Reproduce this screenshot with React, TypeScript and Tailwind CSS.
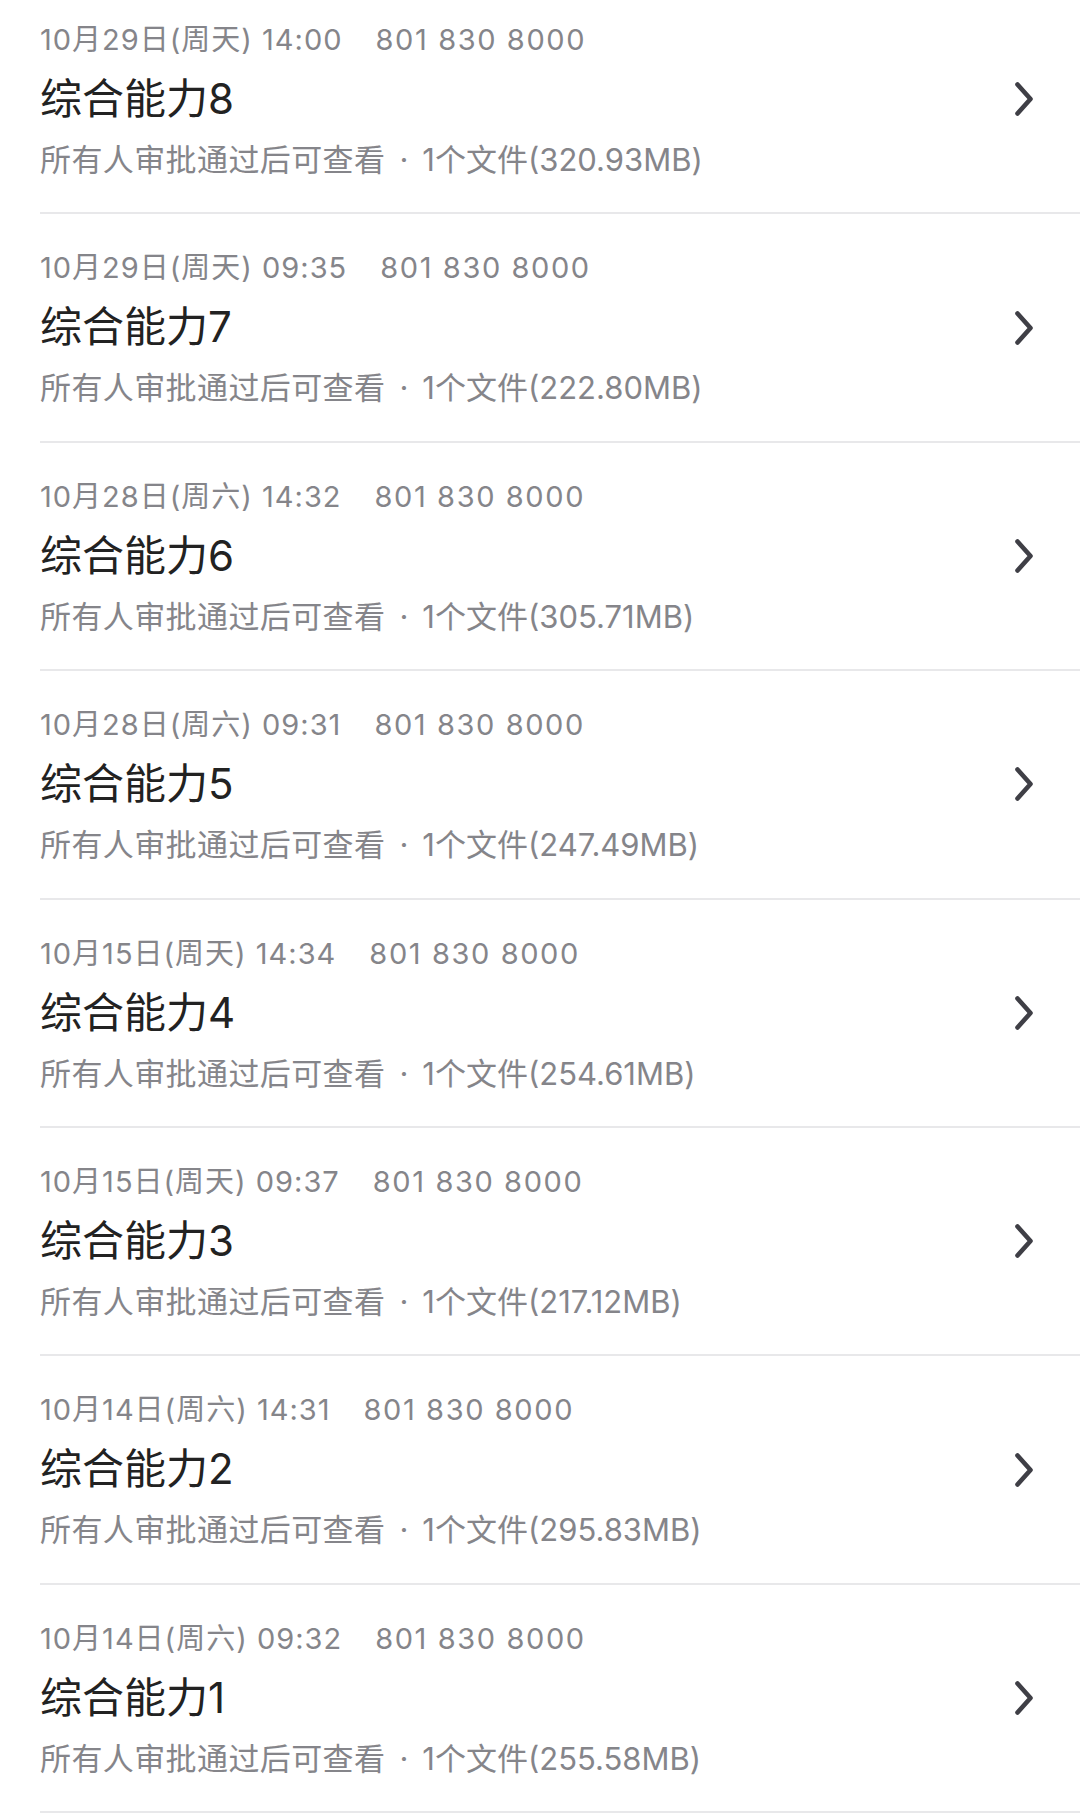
import React from "react";

const rows = [
  { date: "10月29日(周天) 14:00", title: "综合能力8", size: "320.93MB" },
  { date: "10月29日(周天) 09:35", title: "综合能力7", size: "222.80MB" },
  { date: "10月28日(周六) 14:32", title: "综合能力6", size: "305.71MB" },
  { date: "10月28日(周六) 09:31", title: "综合能力5", size: "247.49MB" },
  { date: "10月15日(周天) 14:34", title: "综合能力4", size: "254.61MB" },
  { date: "10月15日(周天) 09:37", title: "综合能力3", size: "217.12MB" },
  { date: "10月14日(周六) 14:31", title: "综合能力2", size: "295.83MB" },
  { date: "10月14日(周六) 09:32", title: "综合能力1", size: "255.58MB" },
];

const font = { fontFamily: 'Inter, "Noto Sans CJK SC", sans-serif' };

function Chevron() {
  return (
    <svg width="24" height="40" viewBox="0 0 24 40" fill="none">
      <path
        d="M5.5 5.5 L18.5 20 L5.5 34.5"
        stroke="#3f3f46"
        strokeWidth="4.6"
        strokeLinecap="round"
        strokeLinejoin="round"
      />
    </svg>
  );
}

export default function App() {
  return (
    <div className="w-[1080px] h-[1815px] overflow-hidden bg-white" style={font}>
      <div className="-mt-[14px] flex flex-col">
        {rows.map((r, i) => (
          <div
            key={i}
            className="ml-[40px] flex items-center border-b-2 border-[#e8e8ea] pr-[44px]"
          >
            <div className="flex flex-1 flex-col pt-[36px] pb-[32.4px]">
              <div className="h-[36px] flex items-center text-[29px] leading-[36px] text-[#85858a]">
                <span className="tracking-[1px]">{r.date}</span>
                <span className="ml-[33px] tracking-[1.6px]">801 830 8000</span>
              </div>
              <div className="mt-[17px] h-[48px] flex items-center text-[42px] leading-[48px] text-[#222222]">
                {r.title}
              </div>
              <div className="mt-[17px] h-[40px] flex items-center text-[31px] leading-[40px] text-[#85858a]">
                <span className="tracking-[0.4px]">所有人审批通过后可查看</span>
                <span className="mx-[14px]">·</span>
                <span>1个文件({r.size})</span>
              </div>
            </div>
            <Chevron />
          </div>
        ))}
      </div>
    </div>
  );
}
